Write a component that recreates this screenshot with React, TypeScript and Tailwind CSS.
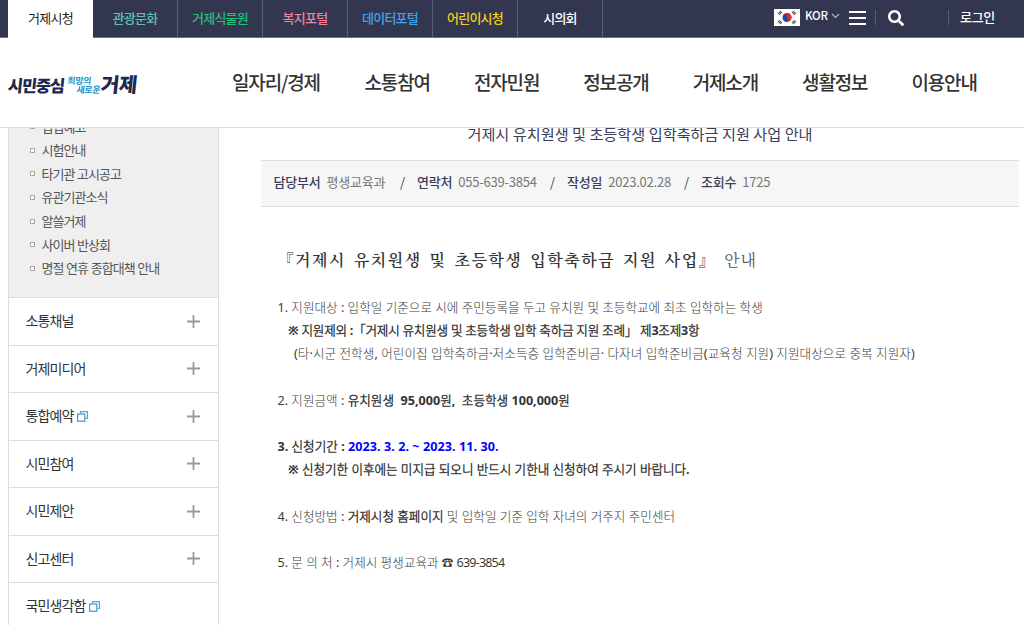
import { FaSearch } from "react-icons/fa";

const siteTabs = [
  { label: "관광문화", color: "text-[#5fc0b9]" },
  { label: "거제식물원", color: "text-[#1fbf7c]" },
  { label: "복지포털", color: "text-[#f0829b]" },
  { label: "데이터포털", color: "text-[#3fa4f0]" },
  { label: "어린이시청", color: "text-[#f2cf1d]" },
  { label: "시의회", color: "text-white" },
];

const mainMenu = ["소통참여", "전자민원", "정보공개", "거제소개", "생활정보", "이용안내"];

const subMenu = [
  "입법예고",
  "시험안내",
  "타기관 고시공고",
  "유관기관소식",
  "알쓸거제",
  "사이버 반상회",
  "명절 연휴 종합대책 안내",
];

const sideMenu = [
  { label: "소통채널", plus: true },
  { label: "거제미디어", plus: true },
  { label: "통합예약", plus: true, external: true },
  { label: "시민참여", plus: true },
  { label: "시민제안", plus: true },
  { label: "신고센터", plus: true },
  { label: "국민생각함", external: true },
];

function Flag() {
  return (
    <svg width="26" height="17" viewBox="0 0 26 17" className="shrink-0">
      <rect width="26" height="17" fill="#fff" />
      <g transform="rotate(20 13 8.5)">
        <circle cx="13" cy="8.5" r="4.5" fill="#1b4a9c" />
        <path d="M8.5 8.5a4.5 4.5 0 0 1 9 0a2.25 2.25 0 0 1-4.5 0a2.25 2.25 0 0 0-4.5 0z" fill="#e8261c" />
      </g>
      <g stroke="#555" strokeWidth="3" strokeDasharray="1 .4">
        <path d="M4.6 5.2L7.4 2.6" />
        <path d="M18.6 2.6L21.4 5.2" />
        <path d="M4.6 11.8L7.4 14.4" />
        <path d="M18.6 14.4L21.4 11.8" />
      </g>
    </svg>
  );
}

function ExternalIcon() {
  return (
    <svg width="11" height="11" viewBox="0 0 11 11" fill="none" className="ml-1 shrink-0">
      <path d="M3.5 2.5V.6h6.9v6.9H8.5" stroke="#3fbf96" strokeWidth="1.2" />
      <rect x=".6" y="3" width="7.2" height="7.2" stroke="#4a90d9" strokeWidth="1.2" />
    </svg>
  );
}

function TopBar() {
  return (
    <div className="flex h-[38px] border-b border-[#6d6f83] bg-[#33364f] pl-2 text-[13px] tracking-[-0.75px]">
      <div className="flex h-[38px] w-[85px] shrink-0 items-center justify-center bg-white pb-[2px] text-[#222]">
        거제시청
      </div>
      {siteTabs.map((tab) => (
        <div
          key={tab.label}
          className={`flex w-[85px] shrink-0 items-center justify-center border-r border-[#5c5e73] pb-[2px] font-medium ${tab.color}`}
        >
          {tab.label}
        </div>
      ))}
      <div className="flex h-[35px] items-center pl-[171px] font-medium text-white">
        <Flag />
        <span className="ml-[5px] w-[23px] pb-[3px] text-[11.5px] tracking-[-0.3px]">KOR</span>
        <svg width="9" height="6" viewBox="0 0 9 6" fill="none" className="mb-[3px] ml-[3px]">
          <path d="M1 1l3.5 3.5L8 1" stroke="#b8bac6" strokeWidth="1.1" />
        </svg>
        <div className="ml-[9px] flex w-[17px] flex-col gap-1">
          <span className="h-[2px] bg-white" />
          <span className="h-[2px] bg-white" />
          <span className="h-[2px] bg-white" />
        </div>
        <span className="ml-[9px] h-[15px] w-px bg-[#5c5e73]" />
        <FaSearch size={16} className="ml-3" />
        <span className="ml-11 h-[15px] w-px bg-[#5c5e73]" />
        <span className="ml-[11px] pb-px tracking-[-0.3px]">로그인</span>
      </div>
    </div>
  );
}

function Logo() {
  return (
    <div className="flex h-6 w-[130px] shrink-0 items-center pt-[5px] font-black text-[#1f2850]">
      <span className="w-[59px] -skew-x-6 text-[16.5px] leading-none tracking-[-1.2px]">시민중심</span>
      <span className="w-[34px] -skew-x-6 text-[9px] leading-[9px] font-bold tracking-[-0.4px] text-[#2793cf]">
        <span className="block">희망의</span>
        <span className="block pl-[10px]">새로운</span>
      </span>
      <span className="-skew-x-6 pb-[2px] text-[20px] leading-none tracking-[-0.5px]">거제</span>
    </div>
  );
}

function Header() {
  return (
    <header className="flex h-[90px] items-center border-b border-[#ddd] bg-white pl-2">
      <Logo />
      <nav className="flex pb-px pl-[94px] text-[19px] font-medium tracking-[-1.15px] whitespace-nowrap text-[#333]">
        <span className="w-[132.5px]">일자리/경제</span>
        {mainMenu.map((item) => (
          <span key={item} className="w-[109.4px]">
            {item}
          </span>
        ))}
      </nav>
    </header>
  );
}

function Sidebar() {
  return (
    <aside className="w-[211px] shrink-0 border-x border-[#ddd]">
      <ul className="-mt-[13px] bg-[#efefef] pb-[17px] pl-[21px] text-[13px] tracking-[-0.95px] text-[#555] [word-spacing:0.6px]">
        {subMenu.map((item) => (
          <li key={item} className="flex h-[23.6px] items-center pb-px">
            <span className="mt-px mr-[6.5px] size-[5px] border border-[#aaa] bg-white" />
            {item}
          </li>
        ))}
      </ul>
      <ul className="text-[14px] tracking-[-0.9px] text-[#333]">
        {sideMenu.map((item) => (
          <li
            key={item.label}
            className="flex h-[47.5px] items-center border-t border-[#ddd] pr-[18px] pl-[16.5px]"
          >
            <span className="pb-px">{item.label}</span>
            {item.external && <ExternalIcon />}
            {item.plus && (
              <svg width="13" height="13" viewBox="0 0 13 13" className="ml-auto">
                <path d="M0 6.5h13M6.5 0v13" stroke="#999" strokeWidth="1.8" />
              </svg>
            )}
          </li>
        ))}
      </ul>
    </aside>
  );
}

function Meta({ label, value, className }: { label: string; value: string; className: string }) {
  return (
    <div className={className}>
      <span className="mr-[6px] font-medium text-[#3b3d58]">{label}</span>
      {value}
    </div>
  );
}

function Article() {
  return (
    <main className="ml-[42px] w-[758px] shrink-0 whitespace-nowrap">
      <h1 className="flex h-8 items-start justify-center text-[15.2px] leading-[11px] text-[#3b3d58]">
        거제시 유치원생 및 초등학생 입학축하금 지원 사업 안내
      </h1>
      <div className="flex h-[47px] items-center border-t border-b border-[#ddd] bg-[#f6f6f6] pb-[3px] pl-[12.5px] text-[13px] tracking-[-0.22px] text-[#777]">
        <Meta label="담당부서" value="평생교육과" className="w-[126.5px]" />
        <span className="w-[17px] text-[#3b3d58]">/</span>
        <Meta label="연락처" value="055-639-3854" className="w-[133px]" />
        <span className="w-[17px] text-[#3b3d58]">/</span>
        <Meta label="작성일" value="2023.02.28" className="w-[117px]" />
        <span className="w-[17px] text-[#3b3d58]">/</span>
        <Meta label="조회수" value="1725" className="w-[80px]" />
      </div>

      <div className="pl-[16.5px] text-[12.6px] leading-[23.25px] text-[#3c3c3c] [font-family:'Noto_Sans','Noto_Sans_CJK_KR_Light','Noto_Sans_CJK_KR',sans-serif]">
        <h2 className="mt-[40px] mb-[22.5px] h-[26px] text-[16px] leading-[26px] font-semibold tracking-[1.5px] text-[#333] [word-spacing:2.4px] [font-family:'Noto_Serif_CJK_KR','Noto_Sans_CJK_KR',serif]">
          『거제시 유치원생 및 초등학생 입학축하금 지원 사업』{" "}
          <span className="font-normal tracking-[0.8px] text-[#555]">안내</span>
        </h2>
        <p>1. 지원대상 : 입학일 기준으로 시에 주민등록을 두고 유치원 및 초등학교에 최초 입학하는 학생</p>
        <p className="pl-[10.5px] font-bold tracking-[-0.25px] text-[#333]">
          ※ 지원제외 :「거제시 유치원생 및 초등학생 입학 축하금 지원 조례」 제3조제3항
        </p>
        <p className="pl-[16.5px] tracking-[0.05px]">
          (타·시군 전학생, 어린이집 입학축하금·저소득층 입학준비금· 다자녀 입학준비금(교육청 지원) 지원대상으로 중복 지원자)
        </p>
        <p className="mt-[23.25px]">
          2. 지원금액 : <b className="font-bold whitespace-pre text-[#333]">유치원생  95,000원,  초등학생 100,000원</b>
        </p>
        <p className="mt-[23.25px] font-bold text-[#333]">
          3. 신청기간 : <span className="tracking-[0.06px] text-[#0000ff]">2023. 3. 2. ~ 2023. 11. 30.</span>
        </p>
        <p className="pl-[10.5px] font-bold tracking-[-0.03px] text-[#333]">
          ※ 신청기한 이후에는 미지급 되오니 반드시 기한내 신청하여 주시기 바랍니다.
        </p>
        <p className="mt-[23.25px]">
          4. 신청방법 : <b className="font-bold text-[#333]">거제시청 홈페이지</b> 및 입학일 기준 입학 자녀의 거주지 주민센터
        </p>
        <p className="mt-[23.25px]">
          5. 문 의 처 : 거제시 평생교육과 <span className="text-[11.5px]">☎</span>{" "}
          <span className="tracking-[-0.85px]">639-3854</span>
        </p>
      </div>
    </main>
  );
}

export default function App() {
  return (
    <div className="flex h-[625px] w-[1024px] flex-col overflow-hidden bg-white [font-family:'Noto_Sans_CJK_KR',sans-serif]">
      <TopBar />
      <Header />
      <div className="flex min-h-0 flex-1 overflow-hidden pl-2">
        <Sidebar />
        <Article />
      </div>
    </div>
  );
}
